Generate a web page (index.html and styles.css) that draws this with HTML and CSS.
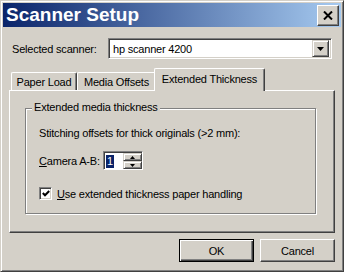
FILE: index.html
```html
<!DOCTYPE html>
<html>
<head>
<meta charset="utf-8">
<link rel="stylesheet" href="styles.css">
</head>
<body>
<div class="window">
  <div class="titlebar">
    <span class="title">Scanner Setup</span>
    <div class="close-btn">
      <svg width="10" height="9" viewBox="0 0 10 9"><path d="M1 0.5 L9 8.5 M9 0.5 L1 8.5" stroke="#000" stroke-width="2" fill="none"/></svg>
    </div>
  </div>
  <div class="content">
    <div class="scanner-row">
      <span class="scanner-label">Selected scanner:</span>
      <div class="combo">
        <span class="combo-text">hp scanner 4200</span>
        <div class="combo-btn">
          <svg width="7" height="4" viewBox="0 0 7 4"><path d="M0 0 H7 L3.5 4 Z" fill="#000"/></svg>
        </div>
      </div>
    </div>
    <div class="tabs">
      <div class="tab tab-paper">Paper Load</div>
      <div class="tab tab-media">Media Offsets</div>
      <div class="tab tab-active">Extended Thickness</div>
    </div>
    <div class="panel">
      <div class="groupbox">
        <span class="group-label">Extended media thickness</span>
        <div class="stitch">Stitching offsets for thick originals (&gt;2 mm):</div>
        <div class="camera-row">
          <span class="camera-label"><u>C</u>amera A-B:</span>
          <div class="spinner">
            <div class="spin-edit"><span class="sel">1</span></div>
            <div class="spin-btns">
              <div class="spin-btn spin-up"><svg width="5" height="3" viewBox="0 0 5 3"><path d="M2.5 0 L5 3 H0 Z" fill="#000"/></svg></div>
              <div class="spin-btn spin-down"><svg width="5" height="3" viewBox="0 0 5 3"><path d="M0 0 H5 L2.5 3 Z" fill="#000"/></svg></div>
            </div>
          </div>
        </div>
        <div class="check-row">
          <div class="checkbox">
            <svg width="8" height="7" viewBox="0 0 8 7"><path d="M0.8 3 L3 5.3 L7.2 1" stroke="#000" stroke-width="2" fill="none"/></svg>
          </div>
          <span class="check-label"><u>U</u>se extended thickness paper handling</span>
        </div>
      </div>
    </div>
    <div class="buttons">
      <div class="btn btn-default">OK</div>
      <div class="btn">Cancel</div>
    </div>
  </div>
</div>
</body>
</html>
```
FILE: styles.css
```css
html, body {
  margin: 0;
  padding: 0;
  background: #d4d0c8;
}

.window {
  width: 344px;
  height: 272px;
  box-sizing: border-box;
  border: 1px solid;
  border-color: #d4d0c8 #404040 #404040 #d4d0c8;
  box-shadow: inset 1px 1px #fff, inset -1px -1px #808080;
  padding: 2px;
  background: #d4d0c8;
  display: flex;
  flex-direction: column;
  font-family: "Liberation Sans", Arial, sans-serif;
  font-size: 11px;
  letter-spacing: -0.2px;
  color: #000;
}

.titlebar {
  height: 24px;
  flex: none;
  background: linear-gradient(to right, #0a246a, #a6caf0);
  display: flex;
  align-items: center;
  justify-content: space-between;
  padding: 0 2px 0 3px;
}

.title {
  color: #fff;
  font-weight: bold;
  font-size: 19px;
  letter-spacing: 0;
  line-height: 24px;
}

.close-btn {
  width: 22px;
  height: 21px;
  box-sizing: border-box;
  background: #d4d0c8;
  border: 1px solid;
  border-color: #fff #404040 #404040 #fff;
  box-shadow: inset -1px -1px #808080;
  display: flex;
  align-items: center;
  justify-content: center;
}

.content {
  flex: 1;
  display: flex;
  flex-direction: column;
  padding: 11px 6px 0 6px;
}

.scanner-row {
  display: flex;
  align-items: center;
  padding-left: 3px;
}

.scanner-label {
  width: 96px;
}

.combo {
  width: 224px;
  height: 21px;
  box-sizing: border-box;
  background: #fff;
  border: 1px solid;
  border-color: #808080 #fff #fff #808080;
  box-shadow: inset 1px 1px #404040, inset -1px -1px #d4d0c8;
  display: flex;
  align-items: center;
  padding: 2px;
}

.combo-text {
  flex: 1;
  padding-left: 2px;
}

.combo-btn {
  width: 17px;
  height: 17px;
  box-sizing: border-box;
  background: #d4d0c8;
  border: 1px solid;
  border-color: #d4d0c8 #404040 #404040 #d4d0c8;
  box-shadow: inset 1px 1px #fff, inset -1px -1px #808080;
  display: flex;
  align-items: center;
  justify-content: center;
}

.tabs {
  margin-top: 9px;
  height: 22px;
  display: flex;
  align-items: flex-end;
  padding-left: 2px;
}

.tab {
  height: 18px;
  box-sizing: border-box;
  border-top: 1px solid #fff;
  border-left: 1px solid #fff;
  border-right: 1px solid #404040;
  box-shadow: inset -1px 0 #808080;
  border-radius: 2px 2px 0 0;
  display: flex;
  align-items: center;
  justify-content: center;
  padding-top: 1px;
}

.tab-paper { width: 66px; }
.tab-media { width: 79px; border-right-color: transparent; box-shadow: none; }

.tab-active {
  position: relative;
  z-index: 1;
  width: 111px;
  height: 23px;
  margin-left: -2px;
  margin-bottom: -1px;
  background: #d4d0c8;
  padding-top: 0;
  padding-bottom: 2px;
}

.panel {
  height: 143px;
  box-sizing: border-box;
  border: 1px solid;
  border-color: #fff #404040 #404040 #fff;
  box-shadow: inset -1px -1px #808080;
  padding: 17px 0 0 15px;
}

.groupbox {
  width: 291px;
  height: 106px;
  box-sizing: border-box;
  border: 1px solid #808080;
  box-shadow: inset 1px 1px #fff, 1px 1px #fff;
  display: flex;
  flex-direction: column;
  align-items: flex-start;
  padding-left: 13px;
}

.group-label {
  margin-top: -8px;
  margin-left: -7px;
  padding: 0 2px;
  line-height: 13px;
  background: #d4d0c8;
}

.stitch {
  margin-top: 13px;
  line-height: 13px;
}

.camera-row {
  margin-top: 11px;
  display: flex;
  align-items: center;
}

.camera-label {
  width: 64px;
}

.spinner {
  width: 40px;
  height: 19px;
  box-sizing: border-box;
  background: #fff;
  border: 1px solid;
  border-color: #808080 #fff #fff #808080;
  box-shadow: inset 1px 1px #404040;
  padding: 1px 0 0 1px;
  display: flex;
}

.spin-edit {
  flex: 1;
  display: flex;
  align-items: center;
  padding-left: 1px;
}

.sel {
  background: #0a246a;
  color: #fff;
  line-height: 13px;
  padding: 0 1px;
}

.spin-btns {
  width: 19px;
  display: flex;
  flex-direction: column;
}

.spin-btn {
  flex: 1;
  box-sizing: border-box;
  background: #d4d0c8;
  border: 1px solid;
  border-color: #d4d0c8 #404040 #404040 #d4d0c8;
  box-shadow: inset 1px 1px #fff, inset -1px -1px #808080;
  display: flex;
  align-items: center;
  justify-content: center;
}

.check-row {
  margin-top: 17px;
  display: flex;
  align-items: center;
}

.checkbox {
  width: 13px;
  height: 13px;
  box-sizing: border-box;
  background: #fff;
  border: 1px solid;
  border-color: #808080 #fff #fff #808080;
  box-shadow: inset 1px 1px #404040, inset -1px -1px #d4d0c8;
  display: flex;
  align-items: center;
  justify-content: center;
}

.check-label {
  margin-left: 5px;
}

.buttons {
  margin-top: 6px;
  display: flex;
  justify-content: flex-end;
  gap: 6px;
}

.btn {
  width: 75px;
  height: 23px;
  box-sizing: border-box;
  border: 1px solid;
  border-color: #fff #404040 #404040 #fff;
  box-shadow: inset -1px -1px #808080;
  display: flex;
  align-items: center;
  justify-content: center;
}

.btn-default {
  border-color: #000;
  box-shadow: inset 1px 1px #fff, inset -1px -1px #404040, inset -2px -2px #808080;
}
```
